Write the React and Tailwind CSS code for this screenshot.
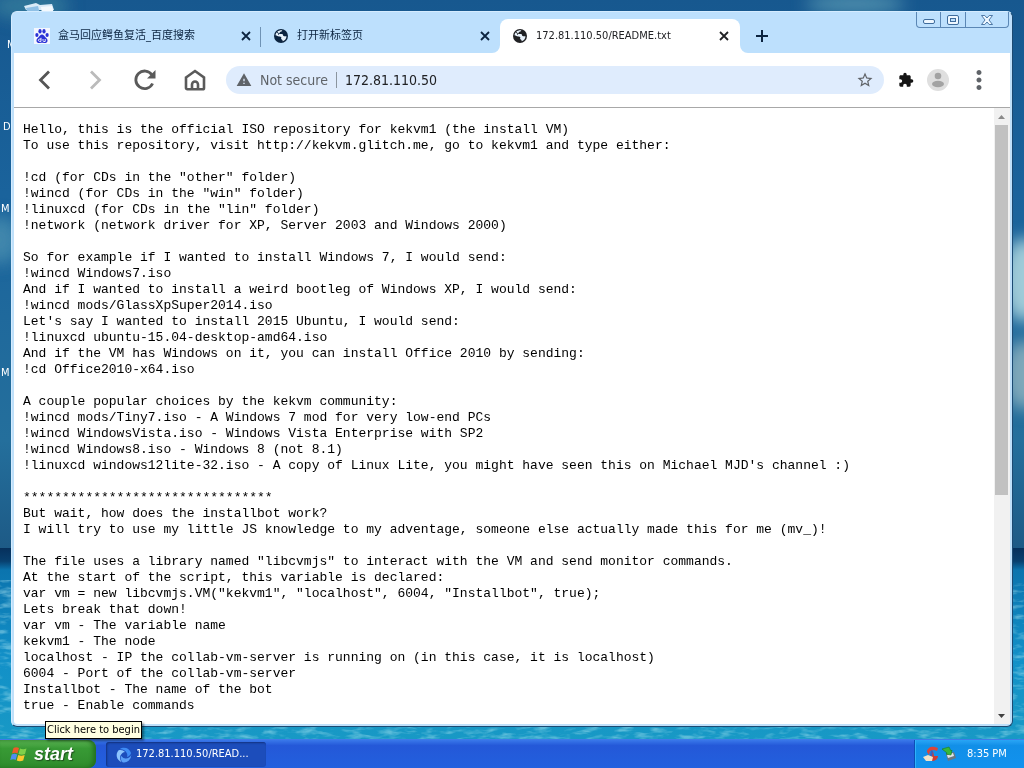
import { MdExtension, MdMoreVert, MdStarBorder, MdWarning } from "react-icons/md";

const readme = `Hello, this is the official ISO repository for kekvm1 (the install VM)
To use this repository, visit http://kekvm.glitch.me, go to kekvm1 and type either:

!cd (for CDs in the "other" folder)
!wincd (for CDs in the "win" folder)
!linuxcd (for CDs in the "lin" folder)
!network (network driver for XP, Server 2003 and Windows 2000)

So for example if I wanted to install Windows 7, I would send:
!wincd Windows7.iso
And if I wanted to install a weird bootleg of Windows XP, I would send:
!wincd mods/GlassXpSuper2014.iso
Let's say I wanted to install 2015 Ubuntu, I would send:
!linuxcd ubuntu-15.04-desktop-amd64.iso
And if the VM has Windows on it, you can install Office 2010 by sending:
!cd Office2010-x64.iso

A couple popular choices by the kekvm community:
!wincd mods/Tiny7.iso - A Windows 7 mod for very low-end PCs
!wincd WindowsVista.iso - Windows Vista Enterprise with SP2
!wincd Windows8.iso - Windows 8 (not 8.1)
!linuxcd windows12lite-32.iso - A copy of Linux Lite, you might have seen this on Michael MJD's channel :)

********************************
But wait, how does the installbot work?
I will try to use my little JS knowledge to my adventage, someone else actually made this for me (mv_)!

The file uses a library named "libcvmjs" to interact with the VM and send monitor commands.
At the start of the script, this variable is declared:
var vm = new libcvmjs.VM("kekvm1", "localhost", 6004, "Installbot", true);
Lets break that down!
var vm - The variable name
kekvm1 - The node
localhost - IP the collab-vm-server is running on (in this case, it is localhost)
6004 - Port of the collab-vm-server
Installbot - The name of the bot
true - Enable commands`;

const tabs = [
  { id: 1, title: "盒马回应鳄鱼复活_百度搜索", icon: "baidu" },
  { id: 2, title: "打开新标签页", icon: "globe" },
  { id: 3, title: "172.81.110.50/README.txt", icon: "globe", active: true },
];

function Wallpaper() {
  return (
    <svg className="absolute inset-0 h-full w-full" viewBox="0 0 1024 768" preserveAspectRatio="none" aria-hidden="true">
      <defs>
        <linearGradient id="sky" x1="0" y1="0" x2="0" y2="1">
          <stop offset="0" stopColor="#17588f" />
          <stop offset="0.35" stopColor="#1a639c" />
          <stop offset="0.8" stopColor="#246f9c" />
          <stop offset="1" stopColor="#1d5a86" />
        </linearGradient>
        <linearGradient id="sea" x1="0" y1="0" x2="0" y2="1">
          <stop offset="0" stopColor="#06305c" />
          <stop offset="0.06" stopColor="#08406f" />
          <stop offset="0.1" stopColor="#0b74ae" />
          <stop offset="0.5" stopColor="#1290c8" />
          <stop offset="1" stopColor="#1a9cc4" />
        </linearGradient>
        <filter id="waves" x="0" y="0" width="1" height="1">
          <feTurbulence type="fractalNoise" baseFrequency="0.06 0.2" numOctaves="3" seed="4" />
          <feColorMatrix values="0 0 0 0 0.55  0 0 0 0 0.9  0 0 0 0 0.95  3 0 0 0 -1.4" />
        </filter>
        <filter id="soft">
          <feGaussianBlur stdDeviation="8" />
        </filter>
      </defs>
      <rect width="1024" height="550" fill="url(#sky)" />
      <g filter="url(#soft)">
        <ellipse cx="30" cy="6" rx="40" ry="14" fill="#3f8aa0" opacity="0.6" />
        <ellipse cx="855" cy="4" rx="50" ry="10" fill="#6fb0bf" opacity="0.6" />
        <ellipse cx="1024" cy="280" rx="22" ry="42" fill="#9fcbd8" />
        <ellipse cx="1024" cy="375" rx="20" ry="35" fill="#7fa8ba" />
        <ellipse cx="0" cy="240" rx="20" ry="24" fill="#3f86ac" />
      </g>
      <rect y="548" width="1024" height="220" fill="url(#sea)" />
      <rect y="580" width="1024" height="188" filter="url(#waves)" opacity="0.4" />
    </svg>
  );
}

function DesktopIcons() {
  return (
    <div className="absolute inset-0 overflow-hidden text-[11px] leading-4 text-white">
      <svg className="absolute left-[22px] top-[2px]" width="34" height="14" viewBox="0 0 34 14" aria-hidden="true">
        <path d="M2 4l12-3 4 2 12-1 2 6H4z" fill="#d9eaf7" />
        <path d="M4 6l12-2 2 8H6z" fill="#8fc0e6" />
        <path d="M19 5l11-1 2 8H20z" fill="#f4f9fd" />
      </svg>
      <span className="absolute left-[7px] top-[37px]">M</span>
      <span className="absolute left-[3px] top-[119px]">D</span>
      <span className="absolute left-[1px] top-[201px]">M</span>
      <span className="absolute left-[1px] top-[365px]">M</span>
    </div>
  );
}

function BaiduIcon() {
  return (
    <svg className="size-4 shrink-0" viewBox="0 0 16 16" aria-hidden="true">
      <rect width="16" height="16" fill="#f4f7ff" />
      <g fill="#2a32d6">
        <ellipse cx="2.9" cy="7" rx="1.6" ry="2.1" />
        <ellipse cx="6" cy="3.2" rx="1.6" ry="2.2" />
        <ellipse cx="10" cy="3.2" rx="1.6" ry="2.2" />
        <ellipse cx="13.1" cy="7" rx="1.6" ry="2.1" />
        <path d="M8 6.6c1.7 0 2.3 1.5 3.4 2.6 1.3 1.2 2.4 2 2.1 3.7-.3 1.8-1.9 2.3-3.5 2-1.3-.2-2.7-.2-4 0-1.6.3-3.2-.2-3.5-2-.3-1.7.8-2.5 2.1-3.7C5.7 8.1 6.3 6.6 8 6.6z" />
      </g>
      <path d="M7 9.8v3.6H5.6c-1.7 0-1.7-2.3 0-2.3H7M9 11v1.6c0 .8.4.9 1 .9h1.2V11" fill="none" stroke="#fff" strokeWidth="0.9" />
    </svg>
  );
}

function GlobeIcon() {
  return (
    <svg className="size-4 shrink-0" viewBox="0 0 16 16" aria-hidden="true">
      <circle cx="8" cy="8" r="7" fill="currentColor" />
      <path
        d="M9.2 2.2c-.1 1-.8 1.4-1.8 1.6-.6.1-.5.9-1 1.3-.5.3-.3.9.1 1h2.600c.8 0 .9.8 1 1.500.2.7 1 .7 1.800.6l1.600.1c-.1 2.400-1.600 4.300-3.800 5 .1-.9-.3-1.600-1-1.900-.8-.3-.7-1.300-.3-1.900C8.200 8.700 7 8.600 6 8.500 4.700 8.300 4 7.400 2.500 7.200 2.900 4.200 5.600 1.800 9.200 2.200z"
        fill="#e8f2fb"
      />
      <path d="M4 4.500c1.500.3 2 1 1.500 2.200" fill="none" stroke="currentColor" />
    </svg>
  );
}

function CloseIcon() {
  return (
    <svg width="10" height="10" viewBox="0 0 10 10" aria-hidden="true">
      <path d="M1 1l8 8M9 1L1 9" stroke="currentColor" strokeWidth="1.8" />
    </svg>
  );
}

function Tab({ tab }) {
  return (
    <div
      className={
        tab.active
          ? "relative flex h-[34px] w-60 items-center rounded-t-lg bg-white pl-3 pr-[11px] text-[#202124]"
          : "relative flex h-[34px] w-[239px] items-center pl-3 pr-[10px] text-[#0c2440]"
      }
    >
      {tab.icon === "baidu" ? <BaiduIcon /> : <GlobeIcon />}
      <a href="#readme" className="ml-2 flex-1 truncate text-[11px] leading-4">
        {tab.title}
      </a>
      <button aria-label="Close tab" className="flex size-[10px] items-center justify-center">
        <CloseIcon />
      </button>
      {tab.id === 1 && <span className="absolute right-0 top-2 h-5 w-px bg-[#6f93b5]" />}
      {tab.active && (
        <>
          <svg className="absolute -left-2 bottom-0" width="8" height="8" aria-hidden="true">
            <path d="M8 0v8H0a8 8 0 0 0 8-8z" fill="#fff" />
          </svg>
          <svg className="absolute -right-2 bottom-0" width="8" height="8" aria-hidden="true">
            <path d="M0 0v8h8a8 8 0 0 1-8-8z" fill="#fff" />
          </svg>
        </>
      )}
    </div>
  );
}

function CaptionButtons() {
  return (
    <div className="mr-[3px] ml-auto flex h-4 self-start rounded-b-[4px] border border-t-0 border-[#5b87b5] text-[#3f6c9c]">
      <button aria-label="Minimize" className="flex w-6 items-center justify-center border-r border-[#5b87b5]">
        <svg width="12" height="6" viewBox="0 0 12 6" className="mt-1" aria-hidden="true">
          <rect x="0.5" y="0.5" width="11" height="4" rx="1.5" fill="#eef7ff" stroke="currentColor" />
        </svg>
      </button>
      <button aria-label="Maximize" className="flex w-[25px] items-center justify-center border-r border-[#5b87b5]">
        <svg width="12" height="10" viewBox="0 0 12 10" aria-hidden="true">
          <rect x="0.5" y="0.5" width="11" height="9" rx="1.5" fill="#eef7ff" stroke="currentColor" />
          <rect x="3.5" y="3.5" width="5" height="3" fill="#bfe0fc" stroke="currentColor" />
        </svg>
      </button>
      <button aria-label="Close" className="flex w-[42px] items-center justify-center">
        <svg width="12" height="10" viewBox="0 0 12 10" aria-hidden="true">
          <path d="M.5.5h3.3L6 3 8.2.5h3.3L8 5l3.5 4.5H8.2L6 7 3.8 9.5H.5L4 5z" fill="#eef7ff" stroke="currentColor" strokeWidth="0.9" />
        </svg>
      </button>
    </div>
  );
}

function TitleBar() {
  return (
    <header className="flex h-[41px] items-end rounded-t-md bg-[#bde0fd] pl-2.5">
      {tabs.map((tab) => (
        <Tab key={tab.id} tab={tab} />
      ))}
      <button aria-label="New tab" className="flex h-[34px] w-11 items-center justify-center text-[#0c2440]">
        <svg width="12" height="12" viewBox="0 0 12 12" aria-hidden="true">
          <path d="M6 0v12M0 6h12" stroke="currentColor" strokeWidth="2" />
        </svg>
      </button>
      <CaptionButtons />
    </header>
  );
}

function Toolbar() {
  return (
    <div className="flex h-[55px] items-center border-b border-[#a8a8a8] bg-white px-1.5 text-[#5f6368]">
      <button aria-label="Back" className="flex w-[50px] justify-center">
        <svg width="20" height="20" viewBox="0 0 20 20" fill="none" aria-hidden="true">
          <path d="M14 1.5L5.5 10l8.5 8.5" stroke="#555" strokeWidth="2.8" />
        </svg>
      </button>
      <button aria-label="Forward" className="flex w-[50px] justify-center">
        <svg width="20" height="20" viewBox="0 0 20 20" fill="none" aria-hidden="true">
          <path d="M6 1.5l8.5 8.5L6 18.5" stroke="#bbb" strokeWidth="2.8" />
        </svg>
      </button>
      <button aria-label="Reload" className="flex w-[50px] justify-center">
        <svg width="22" height="22" viewBox="0 0 22 22" fill="none" aria-hidden="true">
          <path d="M18.6 14.5A8.8 8.8 0 1 1 18 6" stroke="#5a5a5a" strokeWidth="2.8" />
          <path d="M21.5 1v8.5H13z" fill="#5a5a5a" />
        </svg>
      </button>
      <button aria-label="Home" className="flex w-[50px] justify-center">
        <svg width="22" height="22" viewBox="0 0 22 22" fill="none" stroke="#5a5a5a" strokeWidth="2.6" aria-hidden="true">
          <path d="M2 8.5L11 2l9 6.5V19a1.3 1.3 0 0 1-1.3 1.3H3.3A1.3 1.3 0 0 1 2 19z" />
          <path d="M8 20v-4.5a3 3 0 0 1 6 0V20" />
        </svg>
      </button>
      <div className="mx-1.5 flex h-7 flex-1 items-center rounded-full bg-[#dfecfd] px-2.5 text-[14px] leading-5">
        <MdWarning className="size-4" />
        <label htmlFor="address" className="ml-2">
          Not secure
        </label>
        <span className="mx-2 h-4 w-px bg-[#8b959f]" />
        <input id="address" defaultValue="172.81.110.50" className="min-w-0 flex-1 bg-transparent text-[#202124] outline-none" />
        <button aria-label="Bookmark this page">
          <MdStarBorder className="size-[18px]" />
        </button>
      </div>
      <button aria-label="Extensions" className="flex w-8 justify-center text-[#151515]">
        <MdExtension className="size-4" />
      </button>
      <button aria-label="Profile" className="flex w-8 justify-center">
        <svg width="22" height="22" viewBox="0 0 22 22" aria-hidden="true">
          <circle cx="11" cy="11" r="11" fill="#dfdfdf" />
          <circle cx="11" cy="7" r="3.3" fill="#a3a3a3" />
          <ellipse cx="11" cy="15" rx="6" ry="3.3" fill="#a3a3a3" />
        </svg>
      </button>
      <button aria-label="Menu" className="flex w-[50px] justify-center">
        <MdMoreVert className="size-[30px]" />
      </button>
    </div>
  );
}

function Scrollbar() {
  return (
    <div className="flex w-4 shrink-0 flex-col bg-[#f1f1f1] pr-0.5 pl-px">
      <button aria-label="Scroll up" className="flex h-[17px] items-center justify-center">
        <svg width="7" height="4" aria-hidden="true">
          <path d="M0 4L3.5 0 7 4z" fill="#8a8a8a" />
        </svg>
      </button>
      <div className="flex-1">
        <div className="h-[370px] bg-[#c1c1c1]" />
      </div>
      <button aria-label="Scroll down" className="flex h-[17px] items-center justify-center">
        <svg width="7" height="4" aria-hidden="true">
          <path d="M0 0l3.5 4L7 0z" fill="#404040" />
        </svg>
      </button>
    </div>
  );
}

function Browser() {
  return (
    <div className="relative mx-[11px] mt-[11px] mb-3 flex flex-1 flex-col rounded-md border border-t-[#d5ecff] border-r-[#1c4a72] border-b-[#1c4a72] border-l-[#d5ecff] bg-[#bfe0fa]">
      <TitleBar />
      <div className="mx-0.5 mb-0.5 flex flex-1 flex-col rounded-b-[3px] bg-white">
        <Toolbar />
        <main id="readme" className="flex flex-1">
          <pre className="flex-1 px-[9px] pt-3.5 pb-2 font-['Liberation_Mono',monospace] text-[13px] leading-4 text-black">{readme}</pre>
          <Scrollbar />
        </main>
      </div>
    </div>
  );
}

function WindowsFlag() {
  return (
    <svg width="18" height="18" viewBox="0 0 18 18" aria-hidden="true">
      <path d="M3.5 3C5.5 1.8 7.2 2 9 3L7.5 8.5C5.8 7.5 4 7.5 2 8.5z" fill="#ee5a2a" />
      <path d="M10 3.5c2 1 4 1 6.5 0L15 9c-2.4 1-4.5 1-6.5 0z" fill="#7fd04a" />
      <path d="M1.7 9.6C3.7 8.5 5.5 8.6 7.2 9.6L5.7 15C4 14 2.2 14 .2 15z" fill="#4f8df0" />
      <path d="M8.2 10c2 1 4 1 6.5 0l-1.5 5.5c-2.4 1-4.5 1-6.5 0z" fill="#fbc72e" />
    </svg>
  );
}

function Taskbar() {
  return (
    <footer className="relative flex h-[29px] items-stretch border-t border-[#3f7be8] bg-linear-to-b from-[#3a78ea] via-[#2458d8] via-20% to-[#2260de] text-[11px] text-white">
      <button className="flex w-24 items-center gap-1.5 rounded-r-lg bg-linear-to-b from-[#5bb354] via-[#389a35] via-30% to-[#2f8c2c] pl-2.5 shadow-[inset_-3px_0_4px_#23701f]">
        <WindowsFlag />
        <span className="font-['Liberation_Sans',sans-serif] text-[18px] leading-6 font-bold italic [text-shadow:1px_1px_1px_#1f4f1c]">start</span>
      </button>
      <button className="ml-2.5 mt-0.5 mb-px flex w-40 items-center gap-1 rounded-[3px] bg-[#1c4dbb] px-2.5 shadow-[inset_1px_1px_2px_#12327f]">
        <svg className="shrink-0" width="16" height="16" viewBox="0 0 16 16" aria-hidden="true">
          <path d="M15 6A7.300 7.300 0 0 0 3.500 2.300C6.500 2 9.500 3 11 6.500 11.500 8 11.300 9 11 10 13 9.500 14.500 8 15 6z" fill="#3f8cf5" />
          <path d="M2.600 3.200A7.300 7.300 0 0 0 5.500 15C3.800 12.500 3.300 9.500 5.500 7 6.500 5.800 7.500 5.200 9 5 7.500 3 5 2.500 2.600 3.200z" fill="#8cc4fd" />
          <path d="M6.500 15.200A7.300 7.300 0 0 0 15.300 8C14 10.500 11.500 12 8.500 11.300 7 11 6 10 5 8.800 4.300 11.200 4.800 13.500 6.500 15.200z" fill="#5aa0f8" />
        </svg>
        <span className="truncate">172.81.110.50/READ...</span>
      </button>
      <div className="ml-auto flex w-[110px] items-center border-l border-[#0c4fb5] bg-linear-to-b from-[#29a5f5] via-[#118fe8] via-20% to-[#1292ee] pl-2 shadow-[inset_1px_0_0_#2fb2fa]">
        <svg width="16" height="16" viewBox="0 0 16 16" aria-hidden="true">
          <path d="M4 6C4 2 8 0 12 1l3 1-1 3-3-1-4 1-1 4z" fill="#d9463a" />
          <path d="M8 7l2-2 1 5 4 0c0 3-3 5-6 5z" fill="#cf3b33" />
          <path d="M8 4l2 1-1 6-2-1z" fill="#3a5fc0" />
          <path d="M0 11l5-2 5 2-1 4H3z" fill="#f1e3c8" />
        </svg>
        <svg className="ml-0.5" width="16" height="16" viewBox="0 0 16 16" aria-hidden="true">
          <path d="M5 8l8-2 2 6-8 3z" fill="#6b7780" />
          <path d="M6 9l6-2 1 3-6 2z" fill="#dfe5e8" />
          <path d="M1 3l7-2 2 4 1-1-1 5-5-1 1-1z" fill="#38b83a" stroke="#1b7a22" strokeWidth="0.6" />
        </svg>
        <time className="ml-2.5 whitespace-nowrap">8:35 PM</time>
      </div>
      <div
        role="tooltip"
        className="absolute bottom-[29px] left-[45px] border border-black bg-[#ffffe1] px-px leading-4 whitespace-nowrap text-black shadow-[2px_2px_2px_rgba(0,0,0,0.4)]"
      >
        Click here to begin
      </div>
    </footer>
  );
}

export default function App() {
  return (
    <div className="relative flex min-h-screen flex-col bg-[#17588f] font-['DejaVu_Sans_Condensed','Noto_Sans_CJK_SC',sans-serif]">
      <Wallpaper />
      <DesktopIcons />
      <Browser />
      <Taskbar />
    </div>
  );
}
